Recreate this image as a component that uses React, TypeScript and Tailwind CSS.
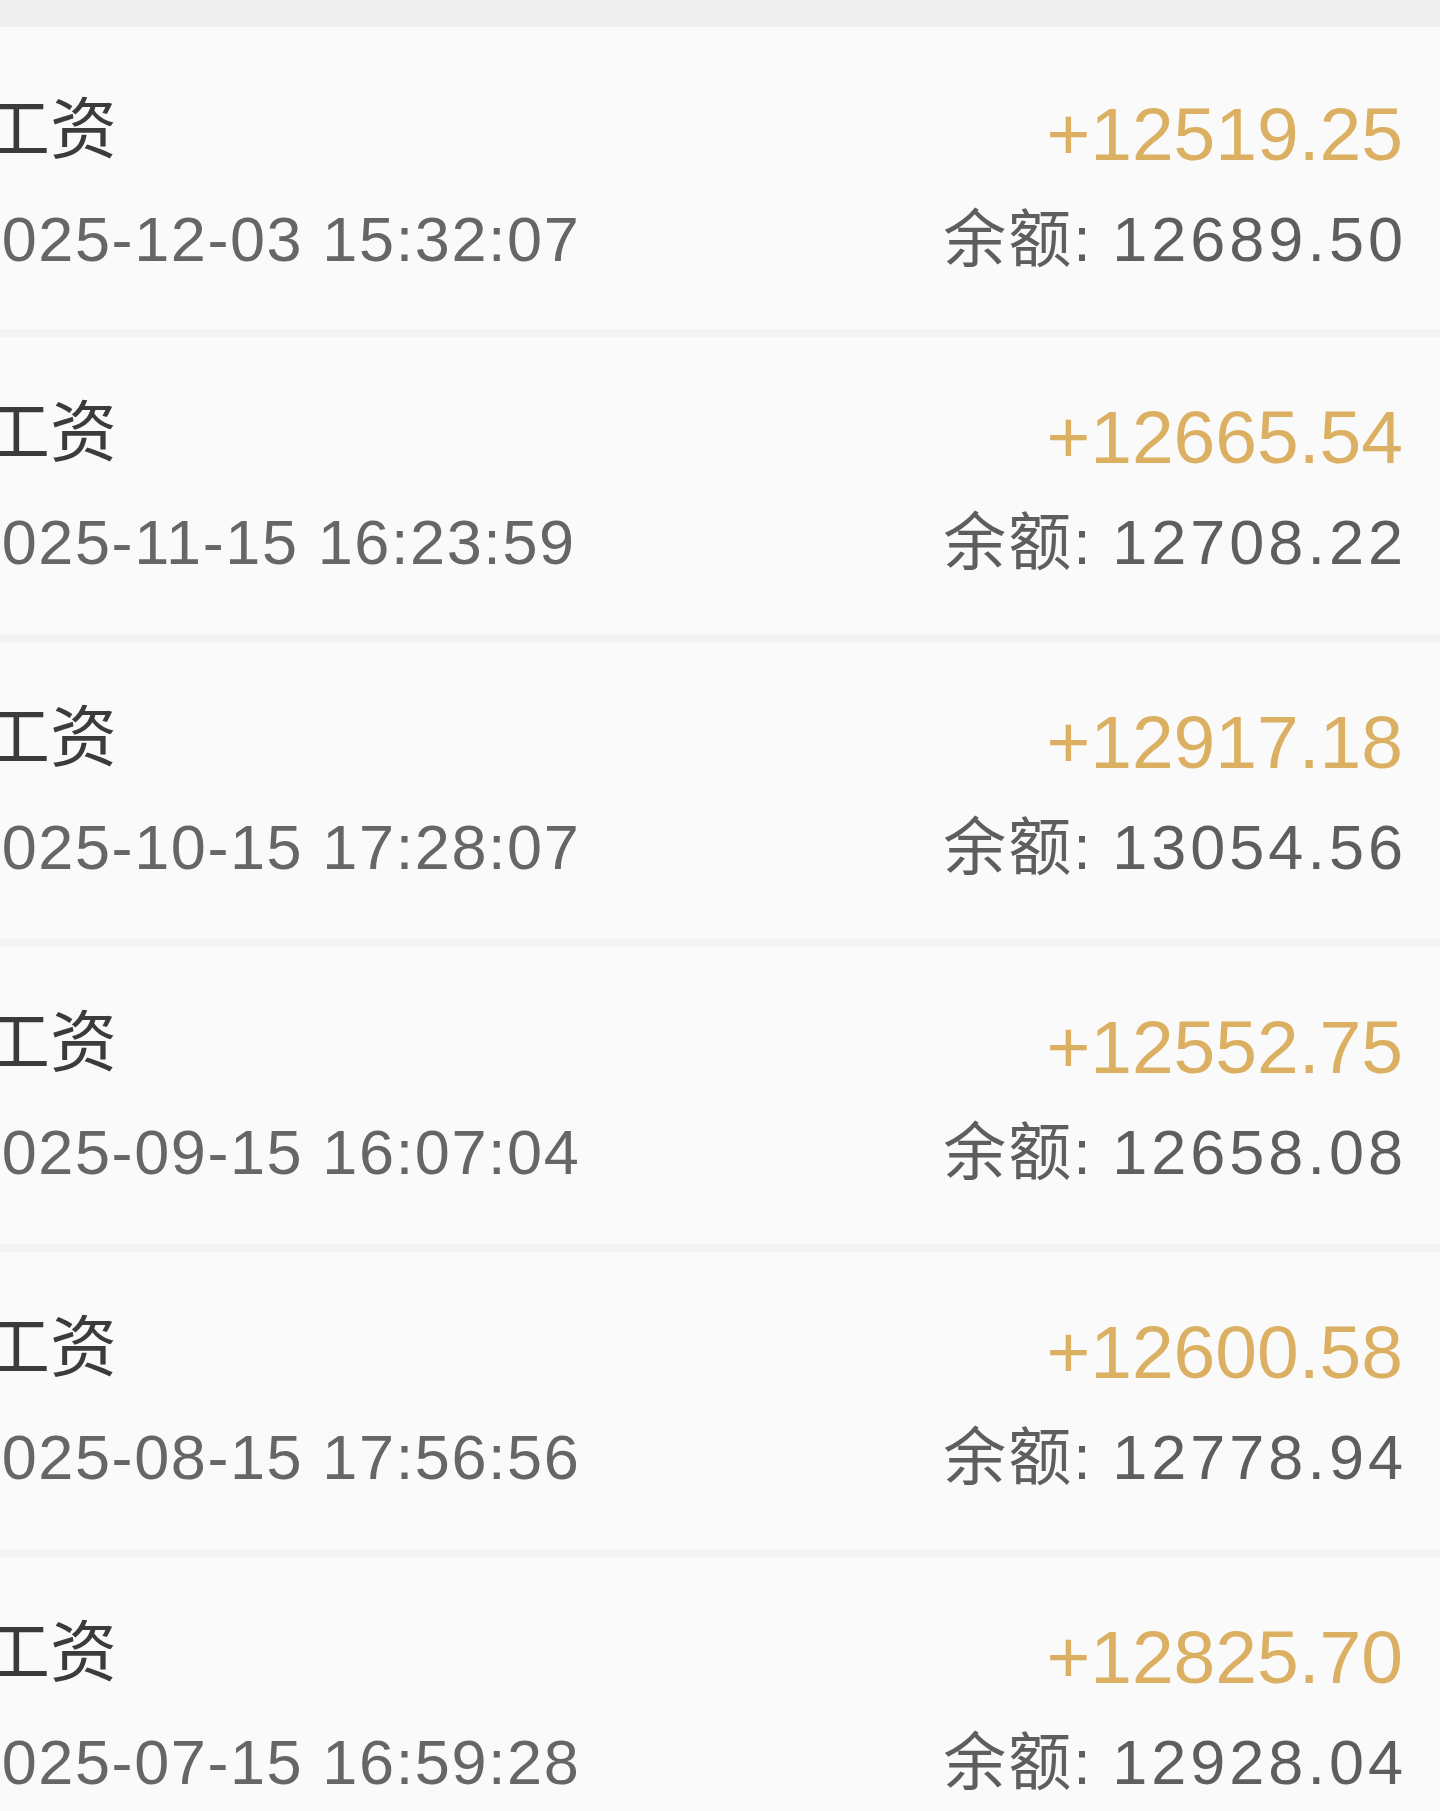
const records = [
  { date: '2025-12-03 15:32:07', amount: '+12519.25', balance: '12689.50' },
  { date: '2025-11-15 16:23:59', amount: '+12665.54', balance: '12708.22' },
  { date: '2025-10-15 17:28:07', amount: '+12917.18', balance: '13054.56' },
  { date: '2025-09-15 16:07:04', amount: '+12552.75', balance: '12658.08' },
  { date: '2025-08-15 17:56:56', amount: '+12600.58', balance: '12778.94' },
  { date: '2025-07-15 16:59:28', amount: '+12825.70', balance: '12928.04' },
];

function Row({ date, amount, balance, first }: { date: string; amount: string; balance: string; first?: boolean }) {
  return (
    <div className={`flex justify-between pr-[37px] ${first ? 'h-[302px] pt-[72px]' : 'h-[297px] pt-[65px]'}`}>
      <div className="flex flex-col">
        <div className="ml-[-17px] mt-[-2px] text-[67px] leading-[66px] text-[#3b3b3b]">工资</div>
        <div className="ml-[-35px] mt-[44px] text-[63px] leading-[64px] tracking-[1.6px] text-[#666666]">{date}</div>
      </div>
      <div className="flex flex-col items-end">
        <div className="text-[75px] leading-[70px] text-[#dcb062]">{amount}</div>
        <div className="mr-[-4px] mt-[38px] text-[63px] leading-[64px] tracking-[4px] text-[#5e5e5e]">
          <span className="tracking-[2px]">余额: </span>
          <span>{balance}</span>
        </div>
      </div>
    </div>
  );
}

export default function App() {
  return (
    <div className="h-[1811px] w-[1440px] overflow-hidden bg-[#fafafa] font-[family-name:'Liberation_Sans','Noto_Sans_CJK_SC',sans-serif]">
      <div className="h-[27px] bg-[#efefef]" />
      {records.map((r, i) => (
        <div key={r.date}>
          <Row {...r} first={i === 0} />
          <div className="h-[8px] bg-[#f3f3f3]" />
        </div>
      ))}
    </div>
  );
}
